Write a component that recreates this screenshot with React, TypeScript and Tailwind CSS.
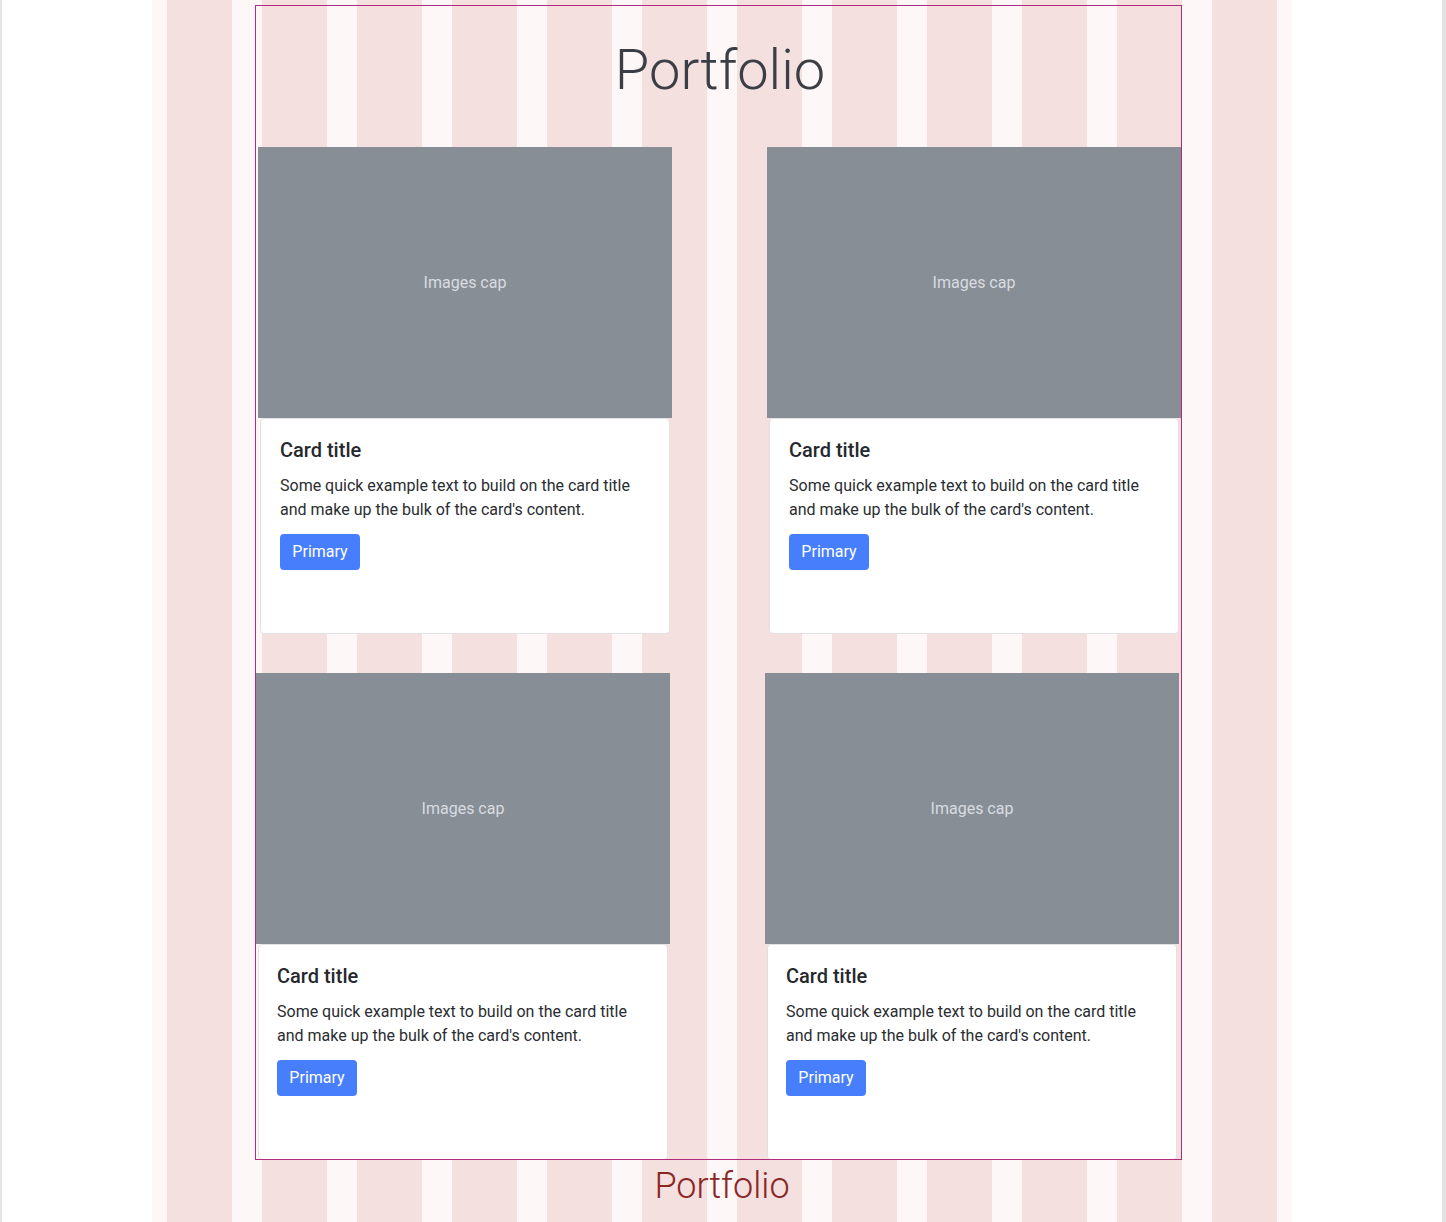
const cols = Array.from({ length: 12 }, (_, i) => i)

function Card({ shift = false }: { shift?: boolean }) {
  return (
    <div className="flex w-[414px] shrink-0 flex-col">
      <div className="flex h-[271px] w-[414px] items-center justify-center bg-[#878e96]">
        <span className="text-[16px] leading-6 text-[#d9dce0]">Images cap</span>
      </div>
      <div
        className={`ml-[2px] mr-[2px] h-[216px] rounded-[4px] border border-[#e1e1e1] bg-white pt-[19px] ${
          shift ? "pl-[18px]" : "pl-[19px]"
        }`}
      >
        <h5 className="text-[20px] font-medium leading-6 text-[#25282c]">Card title</h5>
        <p className="mt-3 w-[370px] text-[16px] leading-6 text-[#2a2d31]">
          Some quick example text to build on the card title and make up the bulk of the card's content.
        </p>
        <button className="mt-3 h-9 w-20 rounded-[4px] bg-[#477efb] text-[16px] leading-6 text-white">
          Primary
        </button>
      </div>
    </div>
  )
}

export default function App() {
  return (
    <div className="flex h-[1222px] w-full justify-center overflow-hidden border-l-2 border-r-4 border-l-[#e6e6e6] border-r-[#e3e3e3] bg-white font-[family-name:Roboto,sans-serif]">
      <div className="relative h-full w-[1140px] bg-[#fdf8f7]">
        {/* layout grid behind the frame */}
        <div className="absolute inset-0 grid grid-cols-12 gap-x-[30px] px-[15px]">
          {cols.map((c) => (
            <div key={c} className="bg-[#f5e0e0]" />
          ))}
        </div>

        <div className="relative flex flex-col">
          <div className="ml-[103px] mt-[5px] h-[1155px] w-[927px] overflow-hidden border border-[#b12a7e]">
            <div className="h-[141px] pl-[3px] pt-[28px] text-center">
              <h1 className="text-[56px] font-light leading-[72px] text-[#3b3e44]">Portfolio</h1>
            </div>
            <div className="flex gap-[95px] pl-[2px]">
              <Card />
              <Card />
            </div>
            <div className="mt-[39px] flex gap-[95px]">
              <Card shift />
              <Card shift />
            </div>
          </div>
          <p className="pt-[2px] text-center text-[36px] font-light leading-[48px] text-[#8b2626]">Portfolio</p>
        </div>
      </div>
    </div>
  )
}
